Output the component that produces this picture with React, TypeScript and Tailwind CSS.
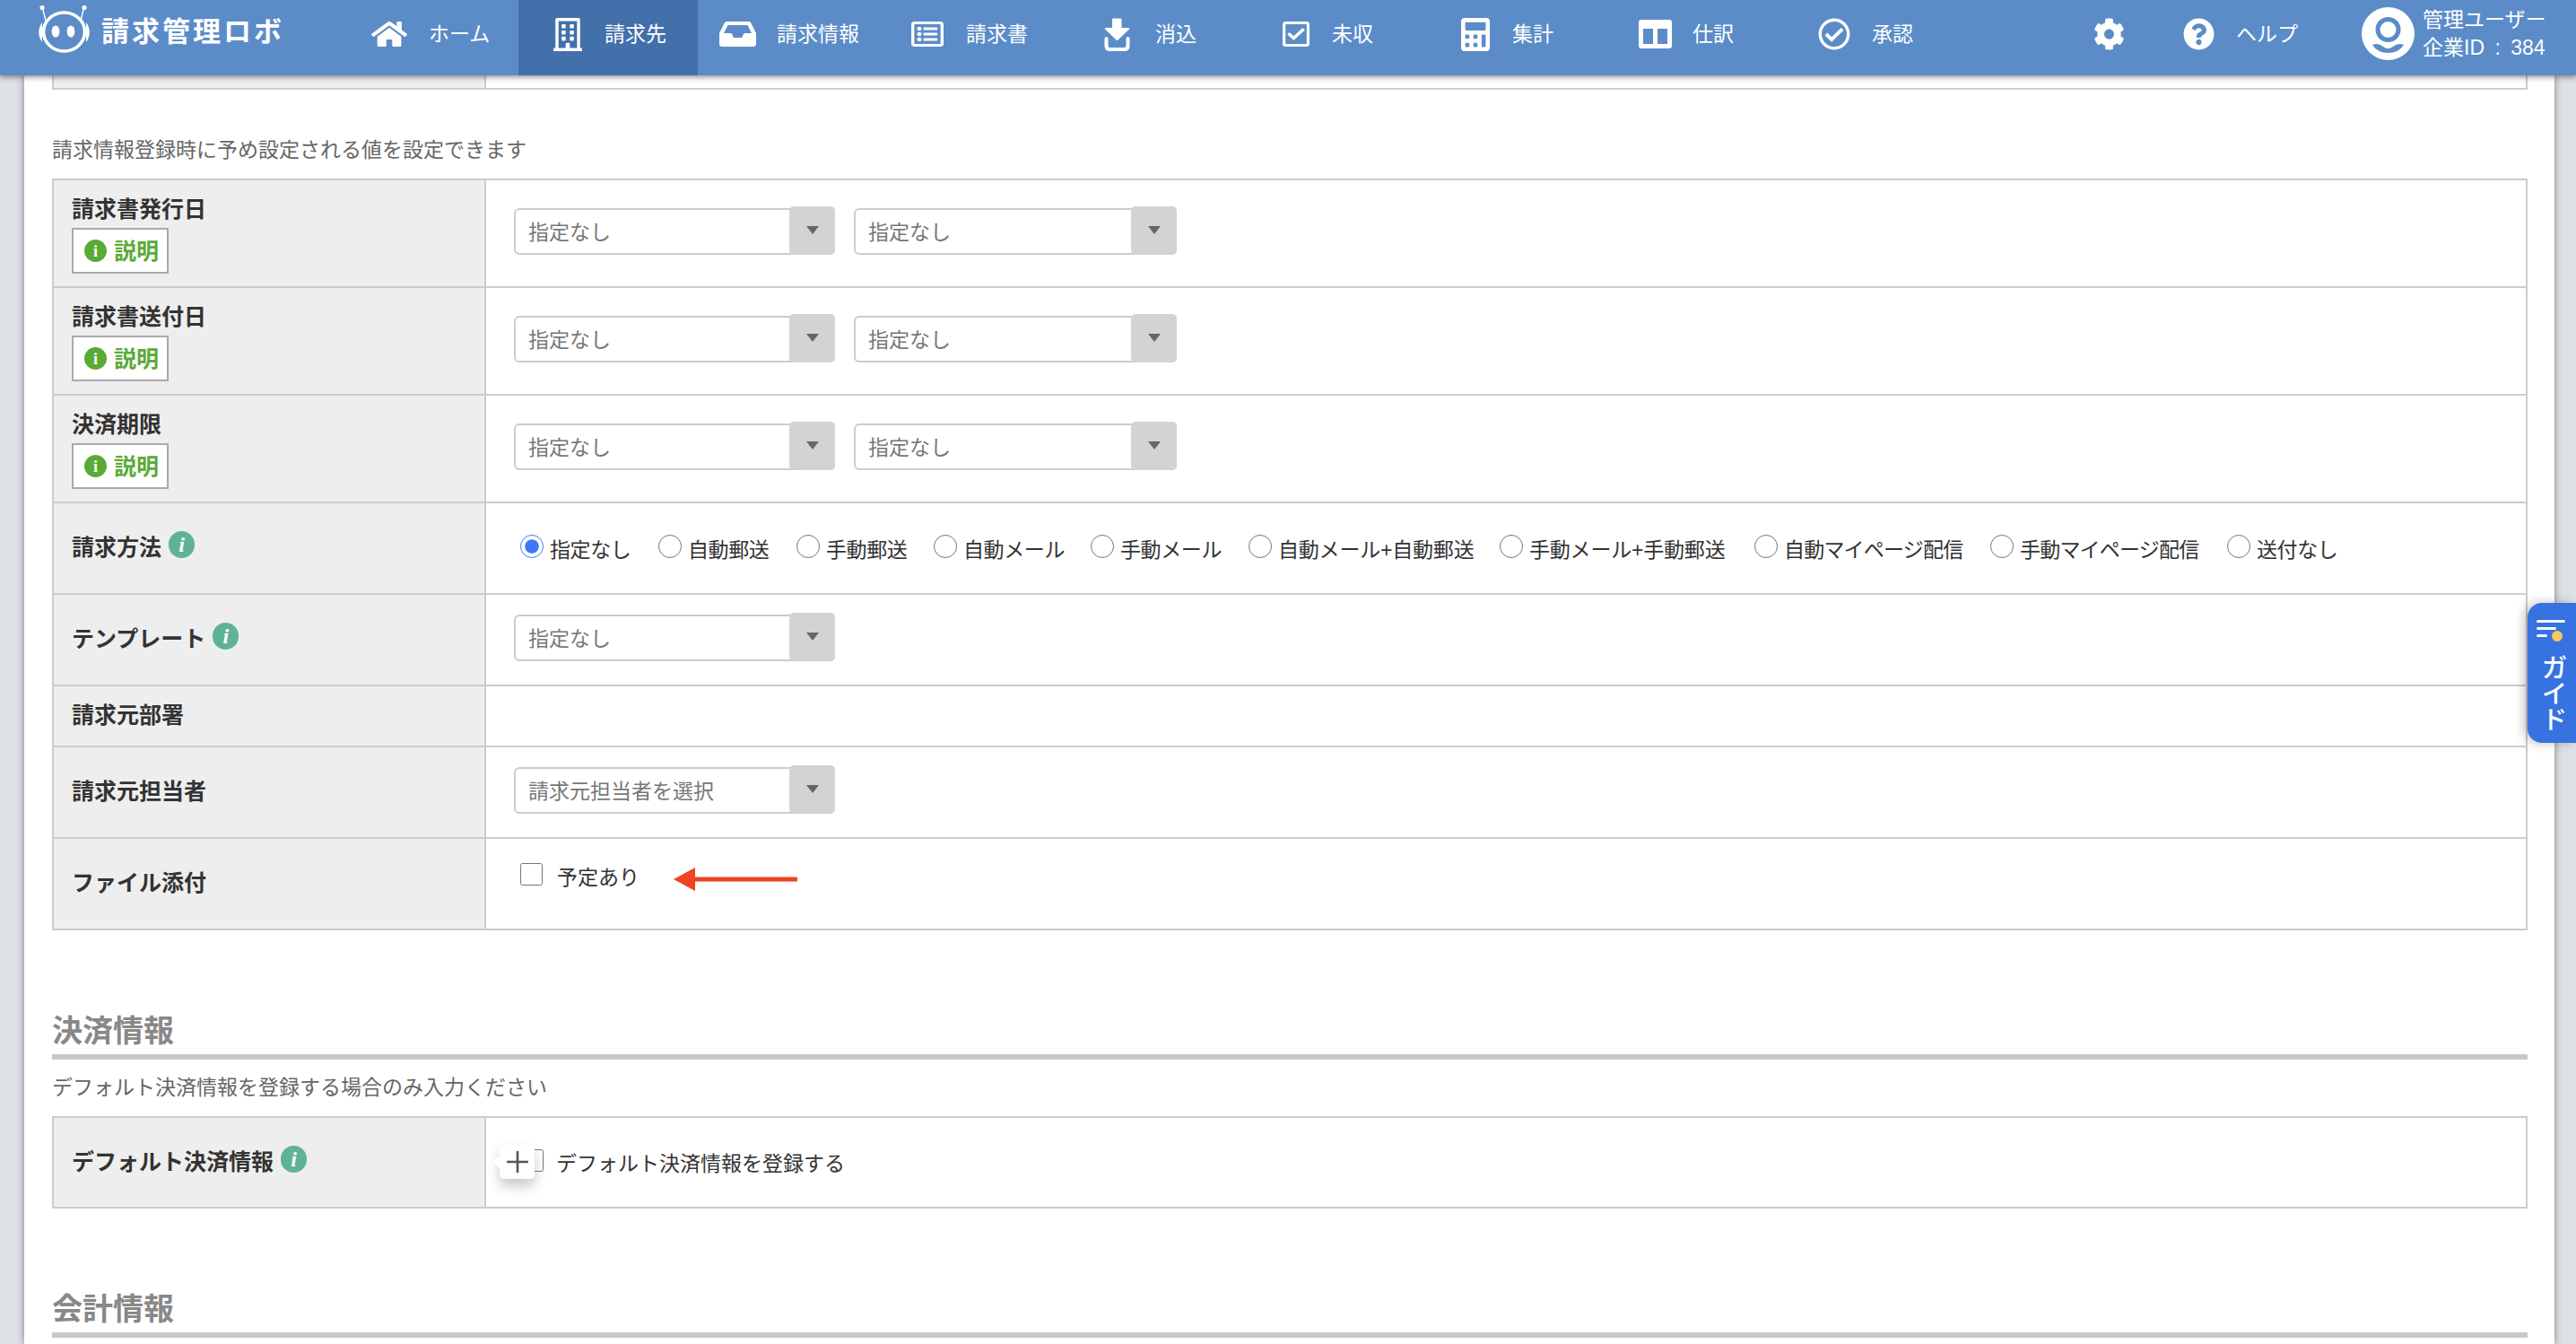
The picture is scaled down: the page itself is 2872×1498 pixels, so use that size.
import React from "react";
import {
  FaHome,
  FaRegBuilding,
  FaRegListAlt,
  FaRegCheckSquare,
  FaCalculator,
  FaRegCheckCircle,
  FaCog,
  FaQuestionCircle,
} from "react-icons/fa";

function Logo() {
  return (
    <svg viewBox="43 4 58 56" className="w-[58px] h-[56px] shrink-0" fill="none">
      <circle cx="47" cy="8.5" r="2.6" fill="#fff" />
      <circle cx="94" cy="8.5" r="2.6" fill="#fff" />
      <path d="M47.5 9 L51 23 M93.5 9 L90 23" stroke="#fff" strokeWidth="1.4" />
      <ellipse cx="71.5" cy="35.5" rx="23" ry="21.5" stroke="#fff" strokeWidth="3.6" />
      <path d="M47 25 C42 31 42 41 47 47 Z M96 25 C101 31 101 41 96 47 Z" fill="#fff" />
      <ellipse cx="62" cy="35" rx="4.4" ry="6.6" fill="#fff" />
      <ellipse cx="79" cy="35" rx="4.4" ry="6.6" fill="#fff" />
    </svg>
  );
}

function InboxIcon() {
  return (
    <svg viewBox="0 0 41 28" className="h-[28px] w-[41px] shrink-0">
      <path d="M8 0 H33 Q34.5 0 35.2 1.5 L41 13 V25 Q41 28 38 28 H3 Q0 28 0 25 V13 L5.8 1.5 Q6.5 0 8 0 Z" fill="#fff" />
      <path d="M9.5 4 H31.5 L36 13 H27.5 L25 18 H16 L13.5 13 H5 Z" fill="#5b8cc8" />
    </svg>
  );
}

function DownloadIcon() {
  return (
    <svg viewBox="0 0 29 37" className="w-[29px] h-[37px] shrink-0" fill="#fff">
      <path d="M10 0.5 H18.5 Q19.5 0.5 19.5 1.5 V11 H27.5 Q29 11 28 12.5 L15.5 24.5 Q14.5 25.5 13.5 24.5 L1 12.5 Q0 11 1.5 11 H9 V1.5 Q9 0.5 10 0.5 Z" />
      <path d="M2.5 23 V31 Q2.5 35 6.5 35 H22.5 Q26.5 35 26.5 31 V23" fill="none" stroke="#fff" strokeWidth="4" strokeLinecap="round" />
    </svg>
  );
}

function ColumnsIcon() {
  return (
    <svg viewBox="0 0 37 32" className="w-[37px] h-[32px] shrink-0">
      <rect width="37" height="32" rx="3" fill="#fff" />
      <rect x="5" y="10" width="11" height="17" fill="#5b8cc8" />
      <rect x="21" y="10" width="11" height="17" fill="#5b8cc8" />
    </svg>
  );
}

function UserIcon() {
  return (
    <svg viewBox="0 0 59 59" className="w-[59px] h-[59px] shrink-0">
      <circle cx="29.5" cy="29.5" r="29.5" fill="#fff" />
      <circle cx="29.5" cy="25" r="11.5" fill="none" stroke="#5b8cc8" strokeWidth="5" />
      <path d="M12 42 C20 38 24 46 29.5 46 C35 46 39 38 47 42 C43 48 37 51 29.5 51 C22 51 16 48 12 42 Z" fill="#5b8cc8" />
    </svg>
  );
}

function NavText({ children, className }: { children: React.ReactNode; className: string }) {
  return <span className={"shrink-0 whitespace-nowrap text-[23px] leading-[30px] text-white " + className}>{children}</span>;
}

function Header() {
  return (
    <header className="relative z-10 flex h-[84px] items-center bg-[#5b8cc8] shadow-[0_2px_6px_rgba(0,0,0,0.45)]">
      <div className="mb-[20px] ml-[43px] flex items-center">
        <Logo />
        <span className="ml-[12px] mt-[7px] w-[210px] shrink-0 whitespace-nowrap text-[31px] font-bold leading-[36px] tracking-[3px] text-white">請求管理ロボ</span>
      </div>
      <div className="ml-[91px] flex h-full items-center pb-[8px]">
        <FaHome className="h-[32px] w-[40px] shrink-0 text-white" preserveAspectRatio="none" />
        <NavText className="ml-[24px] w-[67px]">ホーム</NavText>
      </div>
      <div className="ml-[33px] flex h-full w-[200px] shrink-0 items-center bg-[#4270ab] pb-[8px] pl-[39px]">
        <FaRegBuilding className="h-[37px] w-[32px] shrink-0 text-white" preserveAspectRatio="none" />
        <NavText className="ml-[25px] w-[69px]">請求先</NavText>
      </div>
      <div className="ml-[24px] flex h-full items-center pb-[8px]">
        <InboxIcon />
        <NavText className="ml-[23px] w-[92px]">請求情報</NavText>
      </div>
      <div className="ml-[58px] flex h-full items-center pb-[8px]">
        <FaRegListAlt className="h-[32px] w-[36px] shrink-0 text-white" preserveAspectRatio="none" />
        <NavText className="ml-[25px] w-[69px]">請求書</NavText>
      </div>
      <div className="ml-[85px] flex h-full items-center pb-[8px]">
        <DownloadIcon />
        <NavText className="ml-[28px] w-[46px]">消込</NavText>
      </div>
      <div className="ml-[96px] flex h-full items-center pb-[8px]">
        <FaRegCheckSquare className="h-[32px] w-[30px] shrink-0 text-white" preserveAspectRatio="none" />
        <NavText className="ml-[25px] w-[46px]">未収</NavText>
      </div>
      <div className="ml-[98px] flex h-full items-center pb-[8px]">
        <FaCalculator className="h-[37px] w-[32px] shrink-0 text-white" preserveAspectRatio="none" />
        <NavText className="ml-[25px] w-[46px]">集計</NavText>
      </div>
      <div className="ml-[95px] flex h-full items-center pb-[8px]">
        <ColumnsIcon />
        <NavText className="ml-[23px] w-[46px]">仕訳</NavText>
      </div>
      <div className="ml-[94px] flex h-full items-center pb-[8px]">
        <FaRegCheckCircle className="h-[36px] w-[36px] shrink-0 text-white" preserveAspectRatio="none" />
        <NavText className="ml-[24px] w-[46px]">承認</NavText>
      </div>
      <FaCog className="mb-[8px] ml-[201px] h-[36px] w-[35px] shrink-0 text-white" preserveAspectRatio="none" />
      <div className="ml-[65px] flex h-full items-center pb-[8px]">
        <FaQuestionCircle className="h-[36px] w-[35px] shrink-0 text-white" preserveAspectRatio="none" />
        <NavText className="ml-[24px] w-[66px]">ヘルプ</NavText>
      </div>
      <div className="mb-[9px] ml-[74px] flex items-center">
        <UserIcon />
        <div className="ml-[9px] flex flex-col whitespace-nowrap text-[23px] leading-[31px] text-white">
          <span>管理ユーザー</span>
          <span className="[word-spacing:5px]">企業ID : 384</span>
        </div>
      </div>
    </header>
  );
}

function Arrow() {
  return (
    <svg viewBox="0 0 14 9" className="h-[9px] w-[14px]">
      <polygon points="0,0 14,0 7,9" fill="#666" />
    </svg>
  );
}

function Select({ text, w }: { text: string; w: string }) {
  return (
    <div className={"flex h-[52px] shrink-0 rounded-[6px] border-2 border-[#ccc] bg-white " + w}>
      <span className="flex-1 pl-[14px] pt-[10px] text-[23px] leading-[30px] text-[#777]">{text}</span>
      <div className="-mb-[2px] -mr-[2px] -mt-[4px] flex w-[51px] items-start justify-center rounded-[5px] bg-[#d3d3d3] pt-[22px]">
        <Arrow />
      </div>
    </div>
  );
}

function Info() {
  return (
    <span className="-mt-[6px] ml-[8px] flex h-[30px] w-[29px] shrink-0 items-center justify-center rounded-full bg-[#5fb394] font-['Liberation_Serif',serif] text-[24px] font-bold italic leading-none text-white">
      i
    </span>
  );
}

function Explain() {
  return (
    <div className="mt-[5px] flex h-[51px] w-[108px] items-center border-2 border-[#aaa] bg-white pl-[12px]">
      <span className="flex h-[25px] w-[25px] shrink-0 items-center justify-center rounded-full bg-[#5aaa36] font-['Liberation_Serif',serif] text-[18px] font-bold leading-none text-white">
        i
      </span>
      <span className="ml-[8px] text-[25px] font-bold leading-[30px] text-[#5aaa36]">説明</span>
    </div>
  );
}

function LabelText({ children }: { children: React.ReactNode }) {
  return <span className="whitespace-nowrap text-[25px] font-bold leading-[30px] text-[#333]">{children}</span>;
}

function Row({ h, label, children, labelPb = "pb-[3px]" }: { h: string; label: React.ReactNode; children?: React.ReactNode; labelPb?: string }) {
  return (
    <div className={"flex " + h + " border-b-2 border-[#ccc]"}>
      <div className={"flex w-[482px] shrink-0 items-center border-r-2 border-[#ccc] bg-[#eee] pl-[20px] " + labelPb}>{label}</div>
      <div className="relative flex flex-1 items-center gap-[21px] pb-[5px] pl-[31px]">{children}</div>
    </div>
  );
}

function DateRow({ label }: { label: string }) {
  return (
    <div className="flex h-[120px] border-b-2 border-[#ccc]">
      <div className="w-[482px] shrink-0 border-r-2 border-[#ccc] bg-[#eee] pl-[20px] pt-[17px]">
        <LabelText>{label}</LabelText>
        <Explain />
      </div>
      <div className="flex flex-1 items-center gap-[21px] pb-[5px] pl-[31px]">
        <Select text="指定なし" w="w-[358px]" />
        <Select text="指定なし" w="w-[360px]" />
      </div>
    </div>
  );
}

const radios: [string, string, string][] = [
  ["指定なし", "w-[154px]", "tracking-[-0.4px]"],
  ["自動郵送", "w-[154px]", "tracking-[-0.4px]"],
  ["手動郵送", "w-[153px]", "tracking-[-0.4px]"],
  ["自動メール", "w-[175px]", "tracking-[-0.4px]"],
  ["手動メール", "w-[176px]", "tracking-[-0.4px]"],
  ["自動メール+自動郵送", "w-[280px]", "tracking-[-0.2px]"],
  ["手動メール+手動郵送", "w-[284px]", "tracking-[-0.2px]"],
  ["自動マイページ配信", "w-[263px]", "tracking-[-0.8px]"],
  ["手動マイページ配信", "w-[264px]", "tracking-[-0.8px]"],
  ["送付なし", "w-[140px]", "tracking-[-0.4px]"],
];

function SectionTitle({ children }: { children: React.ReactNode }) {
  return (
    <div>
      <h2 className="mb-[9px] text-[34px] font-bold leading-[34px] text-[#888]">{children}</h2>
      <div className="h-[6px] bg-[#c8c8c8]" />
    </div>
  );
}

function GuideTab() {
  return (
    <div className="absolute right-0 top-[672px] z-10 flex h-[156px] w-[54px] flex-col items-center rounded-l-[16px] bg-[#3672e0] pt-[18px] shadow-[-4px_0_12px_rgba(0,0,0,0.25)]">
      <svg viewBox="0 0 34 26" className="h-[26px] w-[34px]">
        <rect x="0" y="1" width="32" height="3" rx="1.5" fill="#fff" />
        <rect x="0" y="9" width="22" height="3" rx="1.5" fill="#fff" />
        <rect x="0" y="17" width="12" height="3" rx="1.5" fill="#fff" />
        <circle cx="23" cy="19" r="6" fill="#f8c85a" />
      </svg>
      <span className="mt-[13px] text-[29px] font-medium leading-[30px] text-white [writing-mode:vertical-rl]">ガイド</span>
    </div>
  );
}

export default function App() {
  return (
    <div className="relative h-[1498px] w-[2872px] overflow-hidden bg-[#dee2e6] font-['Liberation_Sans','Noto_Sans_CJK_JP',sans-serif]">
      <Header />
      <GuideTab />
      <main className="ml-[27px] mr-[24px] h-[1414px] bg-white pl-[31px] pr-[30px] shadow-[0_0_8px_rgba(0,0,0,0.45)]">
        <div className="flex h-[16px] border-x-2 border-b-2 border-[#ccc]">
          <div className="w-[482px] shrink-0 border-r-2 border-[#ccc] bg-[#eee]" />
        </div>
        <div className="flex h-[99px] items-center pt-[35px] text-[23px] leading-[30px] text-[#666]">
          請求情報登録時に予め設定される値を設定できます
        </div>

        <div className="border-x-2 border-t-2 border-[#ccc]">
          <DateRow label="請求書発行日" />
          <DateRow label="請求書送付日" />
          <DateRow label="決済期限" />
          <Row h="h-[102px]" label={<><LabelText>請求方法</LabelText><Info /></>}>
            <div className="flex items-center pl-[7px]">
              {radios.map(([t, w, track], i) => (
                <label key={t} className={"flex shrink-0 items-center " + w}>
                  <input type="radio" name="method" defaultChecked={i === 0} className="h-[26px] w-[26px] shrink-0 accent-[#3b78f5]" />
                  <span className={"ml-[7px] whitespace-nowrap pt-[8px] text-[23px] leading-[30px] text-[#333] " + track}>{t}</span>
                </label>
              ))}
            </div>
          </Row>
          <Row h="h-[102px]" label={<><LabelText>テンプレート</LabelText><Info /></>}>
            <Select text="指定なし" w="w-[358px]" />
          </Row>
          <Row h="h-[68px]" label={<LabelText>請求元部署</LabelText>} />
          <Row h="h-[102px]" label={<LabelText>請求元担当者</LabelText>}>
            <Select text="請求元担当者を選択" w="w-[358px]" />
          </Row>
          <Row h="h-[102px]" label={<LabelText>ファイル添付</LabelText>}>
            <div className="-mt-[17px] flex items-center pl-[7px]">
              <input type="checkbox" className="h-[25px] w-[25px] shrink-0" />
              <span className="ml-[16px] mt-[7px] whitespace-nowrap text-[23px] leading-[30px] text-[#333]">予定あり</span>
              <svg viewBox="0 0 138 26" className="ml-[38px] mt-[12px] h-[26px] w-[138px] shrink-0">
                <polygon points="0,13 24,0 24,10.5 138,10.5 138,15.5 24,15.5 24,26" fill="#ee4422" />
              </svg>
            </div>
          </Row>
        </div>

        <div className="mt-[95px]">
          <SectionTitle>決済情報</SectionTitle>
        </div>
        <div className="flex h-[63px] items-center pb-[1px] text-[23px] leading-[30px] text-[#666]">
          デフォルト決済情報を登録する場合のみ入力ください
        </div>
        <div className="border-x-2 border-t-2 border-[#ccc]">
          <Row h="h-[101px]" labelPb="pb-[1px]" label={<><LabelText>デフォルト決済情報</LabelText><Info /></>}>
            <div className="flex items-center pl-[8px]">
              <input type="checkbox" className="h-[25px] w-[25px] shrink-0" />
              <span className="ml-[14px] mt-[8px] whitespace-nowrap text-[23px] leading-[30px] text-[#333]">デフォルト決済情報を登録する</span>
            </div>
            <div className="absolute left-[15px] top-[30px] flex h-[38px] w-[39px] items-center justify-center rounded-[5px] bg-white shadow-[0_8px_14px_rgba(0,0,0,0.22)]">
              <span className="absolute -left-[5px] top-[14px] h-[10px] w-[10px] rotate-45 bg-white" />
              <svg viewBox="0 0 24 24" className="relative h-[26px] w-[26px]">
                <path d="M12 1 V23 M1 12 H23" stroke="#555" strokeWidth="2.4" />
              </svg>
            </div>
          </Row>
        </div>

        <div className="mt-[95px]">
          <SectionTitle>会計情報</SectionTitle>
        </div>
      </main>
    </div>
  );
}
